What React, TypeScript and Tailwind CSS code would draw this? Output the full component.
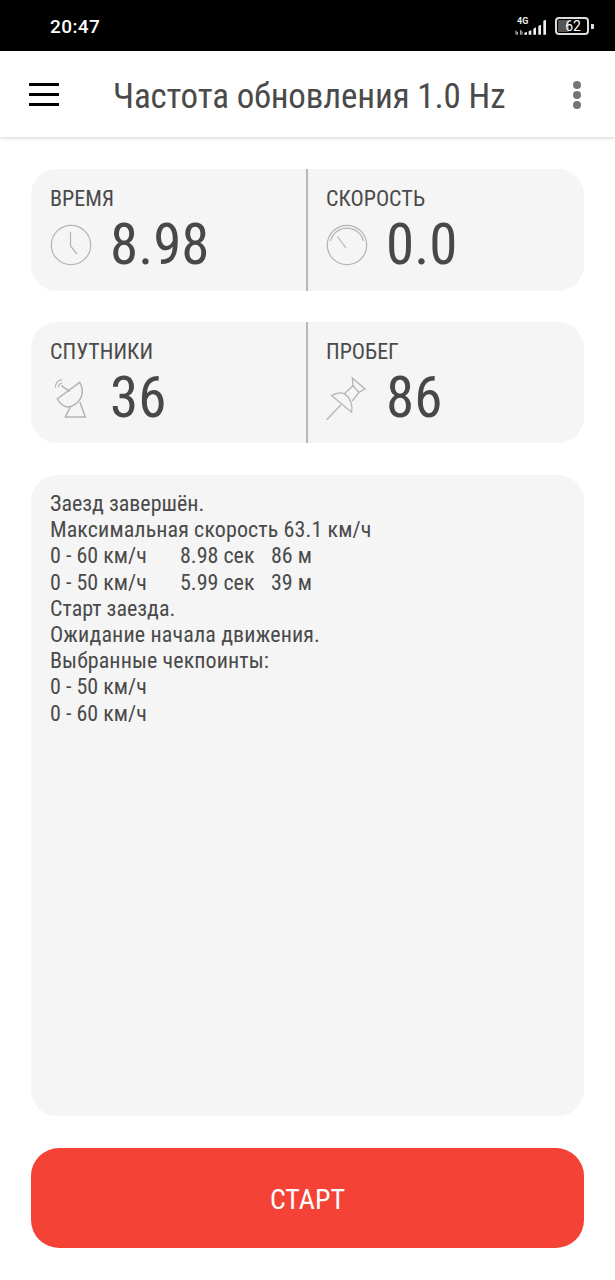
import React from "react";

function ClockIcon() {
  return (
    <svg width="42" height="42" viewBox="0 0 42 42" fill="none" stroke="#b4b4b4" strokeWidth="1.2" className="shrink-0">
      <circle cx="21" cy="21" r="19.7" />
      <path d="M20.5 8 L20.5 22 L27 30" />
    </svg>
  );
}
function GaugeIcon() {
  return (
    <svg width="42" height="42" viewBox="0 0 42 42" fill="none" stroke="#b4b4b4" strokeWidth="1.2" className="shrink-0">
      <circle cx="21" cy="21" r="19.7" />
      <path d="M4.500 17 A17 17 0 0 1 37.500 17" />
      <path d="M11.500 12.500 L20 24" />
    </svg>
  );
}
function DishIcon() {
  return (
    <svg width="46" height="50" viewBox="0 0 138 150" fill="none" stroke="#b4b4b4" strokeWidth="4.500" className="shrink-0">
      <path d="M95 28 C112 58 100 88 70 100 C52 106 38 96 28 78 Z" />
      <path d="M65 55 L40 38" />
      <path d="M22 44 C22 30 30 22 42 20 M31 43 C31 36 35 32 42 30" strokeWidth="3.500" />
      <path d="M68 100 L52 132 L112 132 L96 88" />
    </svg>
  );
}
function PinIcon() {
  return (
    <svg width="46" height="50" viewBox="-3 0 138 150" fill="none" stroke="#b4b4b4" strokeWidth="4" className="shrink-0">
      <path d="M5 140 L48 95" />
      <path d="M20 68 C35 58 48 58 58 62 C72 72 84 90 80 118 Z" />
      <path d="M58 62 L84 38 M82 84 L102 58" />
      <path d="M82 15 L120 48 L102 58 L84 38 Z" />
    </svg>
  );
}

function Cell({ label, value, icon, wide }: { label: string; value: string; icon: React.ReactNode; wide?: boolean }) {
  return (
    <div className={wide ? "w-[275px] pl-[19px] pt-[17px]" : "flex-1 pl-[18px] pt-[17px]"}>
      <div className="text-[22px] leading-[26px] text-[#4a4a4a] [font-stretch:75%]">{label}</div>
      <div className="flex items-center gap-[19px] h-[58px] mt-[4px]">
        <div className="w-[41px] h-[42px] flex items-center justify-center">{icon}</div>
        <div className="text-[57px] leading-[58px] text-[#484848] [font-stretch:75%]">{value}</div>
      </div>
    </div>
  );
}

function Card({ children, h }: { children: React.ReactNode; h: string }) {
  return <div className={`flex rounded-[26px] bg-[#f5f5f5] ${h}`}>{children}</div>;
}

export default function App() {
  return (
    <div className="w-[615px] h-[1280px] bg-white flex flex-col font-['Roboto',sans-serif] overflow-hidden">
      <div className="h-[51px] bg-black flex items-center justify-between pl-[50px] pr-[21px] shrink-0">
        <span className="text-white text-[19px] font-medium tracking-[0.4px] pt-[3px]">20:47</span>
        <div className="flex items-center gap-[8px] pt-[1px]">
          <svg width="33" height="20" viewBox="0 0 99 60">
            <text x="9" y="23" fontSize="27" fontWeight="700" fill="#eee" fontFamily="Roboto">4G</text>
            <path d="M6 44v12M10 48v8M20 42v14M24 46v10" stroke="#ccc" strokeWidth="3" />
            <path d="M37 56v-6l8-2v8zM50 56v-10l8-3v13zM64 56v-18l8-4v22zM79 56v-26l8-4v30zM94 56v-42l8-3v45z" fill="#f0f0f0" transform="translate(-6 0)" />
          </svg>
          <div className="flex items-center">
            <div className="relative w-[34px] h-[18px] rounded-[4px] border-2 border-[#ddd] flex items-center justify-center">
              <div className="absolute left-[1px] top-[1px] bottom-[1px] w-[11px] bg-[#555] rounded-[1px]" />
              <span className="relative text-white text-[14px] leading-none pl-[2px]">62</span>
            </div>
            <div className="w-[3px] h-[5px] bg-[#ddd] ml-[2px] rounded-r-[1px]" />
          </div>
        </div>
      </div>

      <div className="h-[86px] bg-white shadow-[0_1px_4px_rgba(0,0,0,0.18)] flex items-center shrink-0 relative">
        <div className="ml-[29px] w-[30px] flex flex-col gap-[7px]">
          <div className="h-[3px] bg-black" />
          <div className="h-[3px] bg-black" />
          <div className="h-[3px] bg-black" />
        </div>
        <div className="ml-[54px] pt-[5px] text-[35px] leading-none text-[#4a4a4a] [font-stretch:75%] whitespace-nowrap tracking-[-0.13px]">Частота обновления 1.0 Hz</div>
        <div className="absolute left-[573px] top-[30px] flex flex-col gap-[2px]">
          <div className="w-[8px] h-[8px] rounded-full bg-[#757575]" />
          <div className="w-[8px] h-[8px] rounded-full bg-[#757575]" />
          <div className="w-[8px] h-[8px] rounded-full bg-[#757575]" />
        </div>
      </div>

      <div className="flex-1 px-[31px] pt-[32px] pb-[32px] flex flex-col">
        <Card h="h-[122px]">
          <Cell wide label="ВРЕМЯ" value="8.98" icon={<ClockIcon />} />
          <div className="w-[2px] bg-[#b8b8b8]" />
          <Cell label="СКОРОСТЬ" value="0.0" icon={<GaugeIcon />} />
        </Card>
        <div className="mt-[31px]">
          <Card h="h-[121px]">
            <Cell wide label="СПУТНИКИ" value="36" icon={<DishIcon />} />
            <div className="w-[2px] bg-[#b8b8b8]" />
            <Cell label="ПРОБЕГ" value="86" icon={<PinIcon />} />
          </Card>
        </div>
        <div className="mt-[32px] h-[641px] rounded-[26px] bg-[#f5f5f5] pl-[19px] pt-[16px] text-[22px] leading-[26.2px] text-[#4a4a4a] [font-stretch:75%]">
          <div>Заезд завершён.</div>
          <div className="tracking-[0.1px]">Максимальная скорость 63.1 км/ч</div>
          <div className="flex"><span className="w-[130px]">0 - 60 км/ч</span><span className="w-[91px]">8.98 сек</span><span>86 м</span></div>
          <div className="flex"><span className="w-[130px]">0 - 50 км/ч</span><span className="w-[91px]">5.99 сек</span><span>39 м</span></div>
          <div>Старт заезда.</div>
          <div className="tracking-[0.15px]">Ожидание начала движения.</div>
          <div className="tracking-[0.1px]">Выбранные чекпоинты:</div>
          <div>0 - 50 км/ч</div>
          <div>0 - 60 км/ч</div>
        </div>
        <div className="mt-[32px] h-[100px] rounded-[28px] bg-[#f44336] flex items-center justify-center pt-[3px] text-white text-[28px] [font-stretch:75%]">СТАРТ</div>
      </div>
    </div>
  );
}
